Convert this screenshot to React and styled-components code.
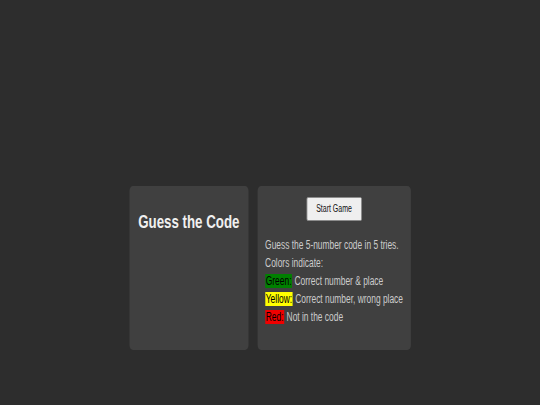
import React from 'react'
import styled, { createGlobalStyle } from 'styled-components'

// the reference is squeezed sideways, so the page is laid out wide and pressed to 540px
const SQUEEZE = 0.7

const GlobalStyle = createGlobalStyle`
  html, body {
    margin: 0;
    padding: 0;
    background: #2d2d2d;
    overflow: hidden;
  }
  body {
    font-family: "Liberation Sans", Arial, sans-serif;
  }
`

const Stage = styled.div`
  width: ${540 / SQUEEZE}px;
  height: 405px;
  transform: scaleX(${SQUEEZE});
  transform-origin: 0 0;
  display: flex;
  justify-content: center;
  align-items: flex-start;
  padding-top: 186px;
  box-sizing: border-box;
  gap: 13px;
`

const Card = styled.div`
  width: ${p => p.$w}px;
  height: 164px;
  box-sizing: border-box;
  background: #404040;
  border-radius: 5px;
  display: flex;
  flex-direction: column;
  padding: ${p => p.$pad};
`

const Title = styled.h2`
  margin: 0;
  font-size: 19px;
  font-weight: bold;
  color: #f0f0f0;
  text-align: center;
`

const StartButton = styled.button`
  align-self: center;
  font-family: "Liberation Sans", Arial, sans-serif;
  font-size: 10px;
  line-height: 12px;
  padding: 5px 13px;
  height: 24px;
  background: #efefef;
  color: #111;
  border: 1px solid #8a8a8a;
  border-radius: 2px;
  margin-bottom: 15px;
`

const Info = styled.div`
  font-size: 12px;
  line-height: 18px;
  color: #cccccc;
`

const Line = styled.div`
  white-space: nowrap;
`

const Tag = styled.span`
  background: ${p => p.$bg};
  color: #000;
  padding: 0 1px;
`

const legend = [
  { label: 'Green:', bg: '#008000', text: ' Correct number & place' },
  { label: 'Yellow:', bg: '#ffff00', text: ' Correct number, wrong place' },
  { label: 'Red:', bg: '#f00000', text: ' Not in the code' },
]

export default function App() {
  return (
    <>
      <GlobalStyle />
      <Stage>
        <Card $w={170} $pad="25px 8px">
          <Title>Guess the Code</Title>
        </Card>
        <Card $w={219} $pad="11px 11px 25px">
          <StartButton>Start Game</StartButton>
          <Info>
            <Line>Guess the 5-number code in 5 tries.</Line>
            <Line>Colors indicate:</Line>
            {legend.map(item => (
              <Line key={item.label}>
                <Tag $bg={item.bg}>{item.label}</Tag>
                {item.text}
              </Line>
            ))}
          </Info>
        </Card>
      </Stage>
    </>
  )
}
